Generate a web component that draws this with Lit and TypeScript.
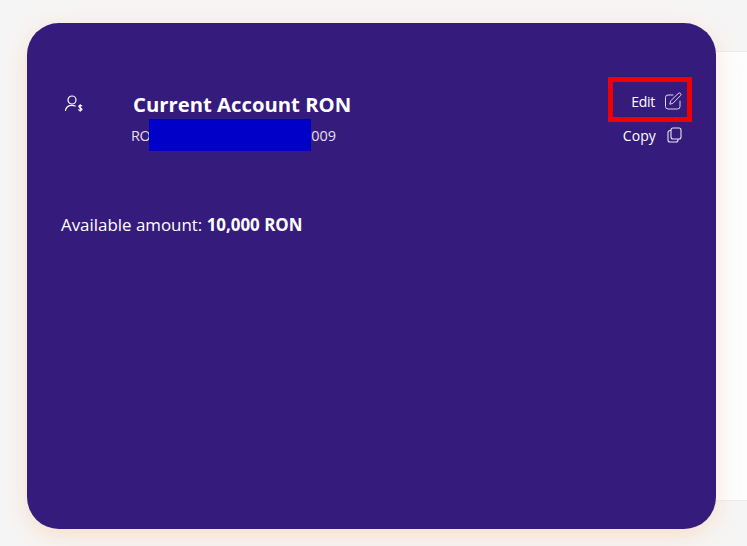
import { LitElement, html, css } from "lit";
import { customElement } from "lit/decorators.js";

@customElement("app-root")
export class AppRoot extends LitElement {
  static styles = css`
    :host {
      display: block;
      width: 747px;
      height: 546px;
      overflow: hidden;
      background: #f6f5f5;
      font-family: "Open Sans", sans-serif;
      color: #fff;
    }
    .page {
      display: grid;
      height: 546px;
      box-sizing: border-box;
      padding: 23px 0 17px 27px;
    }
    .panel,
    .card {
      grid-area: 1 / 1;
    }
    .panel {
      justify-self: end;
      width: 200px;
      height: 450px;
      margin-top: 28px;
      background: #fdfdfe;
      border: 1px solid #ececec;
      border-right: 0;
      box-sizing: border-box;
    }
    .card {
      position: relative;
      width: 689px;
      height: 506px;
      box-sizing: border-box;
      padding: 68px 34px 0;
      background: #351b7b;
      border-radius: 32px;
      box-shadow: 0 6px 22px rgba(250, 190, 140, 0.4);
    }
    .head {
      display: flex;
      align-items: flex-start;
    }
    .person {
      width: 69px;
      flex: none;
      padding: 4px 0 0 3px;
    }
    .person svg,
    .action svg {
      display: block;
    }
    .info {
      flex: 1;
    }
    .title {
      font-size: 20.3px;
      font-weight: 700;
      line-height: 26px;
      margin-bottom: 2px;
    }
    .number {
      display: flex;
      align-items: center;
      height: 32px;
      margin-left: -2px;
      font-size: 14.5px;
      color: #e4dff0;
    }
    .number span:first-child {
      margin-right: -1px;
      letter-spacing: -0.5px;
    }
    .mask {
      width: 162px;
      height: 32px;
      background: #0000c8;
    }
    .actions {
      display: flex;
      flex-direction: column;
      align-items: flex-end;
      gap: 14px;
    }
    .action {
      display: flex;
      align-items: center;
      gap: 9px;
      height: 20px;
      font-size: 14px;
      font-weight: 500;
      letter-spacing: -0.25px;
    }
    .action.copy {
      gap: 11px;
      letter-spacing: 0.1px;
    }
    .highlight {
      position: absolute;
      left: 581px;
      top: 54px;
      width: 84px;
      height: 45px;
      box-sizing: border-box;
      border: 5px solid #f00000;
    }
    .amount {
      margin-top: 63px;
      font-size: 16.900px;
      line-height: 22px;
    }
    .amount b {
      font-weight: 700;
    }
  `;

  render() {
    return html`
      <div class="page">
        <div class="panel"></div>
        <div class="card">
          <div class="head">
            <div class="person">
              <svg width="20" height="18" viewBox="0 0 20 18" fill="none" stroke="#fff" stroke-width="1.2" stroke-linecap="round">
                <circle cx="8" cy="5" r="4" />
                <path d="M1.500 15.500c.4-3.400 3-5.200 6.500-5.200 1.200 0 2.300.2 3.200.7" />
                <path d="M17.800 10.800c-.6-.6-3-.8-3 .8 0 1.700 3.200 1 3.200 2.700 0 1.400-2.600 1.300-3.400.6M16.200 9.500v6.800" stroke-width="1.100" />
              </svg>
            </div>
            <div class="info">
              <div class="title">Current Account RON</div>
              <div class="number"><span>RO</span><span class="mask"></span><span>009</span></div>
            </div>
            <div class="actions">
              <div class="action">
                Edit
                <svg width="18" height="18" viewBox="0 0 18 18" fill="none" stroke="#dcd7ea" stroke-width="1" stroke-linejoin="round" stroke-linecap="round">
                  <path d="M9 3H4A2.500 2.500 0 0 0 1.500 5.500v9A2.500 2.500 0 0 0 4 17h9.500a2.500 2.500 0 0 0 2.500-2.500V9" />
                  <path d="M14.300 1.400a1.500 1.500 0 0 1 2.200 2.200L8.800 11.400 5.800 12.200l.8-3z" />
                </svg>
              </div>
              <div class="action copy">
                Copy
                <svg width="15" height="16" viewBox="0 0 15 16" fill="none" stroke="#e8e4f2" stroke-width="1.100" stroke-linejoin="round">
                  <rect x="4" y="1" width="10" height="11" rx="2" />
                  <path d="M4 3.500H3A2 2 0 0 0 1 5.500V13a2 2 0 0 0 2 2h6a2 2 0 0 0 2-2v-1" />
                </svg>
              </div>
            </div>
          </div>
          <div class="highlight"></div>
          <div class="amount">Available amount: <b>10,000 RON</b></div>
        </div>
      </div>
    `;
  }
}
